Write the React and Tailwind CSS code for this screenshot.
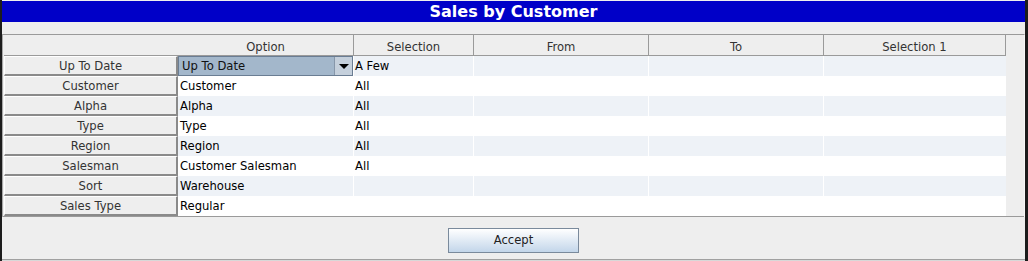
const columns = [
  { label: "Option", w: "w-[176px]" },
  { label: "Selection", w: "w-[120px]" },
  { label: "From", w: "w-[175px]" },
  { label: "To", w: "w-[175px]" },
  { label: "Selection 1", w: "w-[182px]" },
];

const rows = [
  { name: "Up To Date", option: "Up To Date", selection: "A Few", combo: true },
  { name: "Customer", option: "Customer", selection: "All" },
  { name: "Alpha", option: "Alpha", selection: "All" },
  { name: "Type", option: "Type", selection: "All" },
  { name: "Region", option: "Region", selection: "All" },
  { name: "Salesman", option: "Customer Salesman", selection: "All" },
  { name: "Sort", option: "Warehouse", selection: "" },
  { name: "Sales Type", option: "Regular", selection: "" },
];

const Combo = ({ value }) => (
  <div className="flex h-[20px] w-full border border-[#6a7d93] bg-[#a3b7cb]">
    <div className="flex-1 pl-[3px] leading-[19px] text-[#111]">{value}</div>
    <div className="w-[18px] border-l border-[#8797aa] bg-[#c5d0dc] flex items-center justify-center">
      <div className="w-0 h-0 border-l-[5px] border-r-[5px] border-t-[5px] border-l-transparent border-r-transparent border-t-black"></div>
    </div>
  </div>
);

const App = () => {
  return (
    <div className="w-[1028px] h-[261px] bg-[#1c1c1c] flex font-['DejaVu_Sans',sans-serif] text-[11.6px] overflow-hidden">
      <div className="ml-[2px] w-[1023px] h-full flex flex-col bg-[#eeeeee]">
        <div className="mt-[1px] h-[21px] bg-[#0000c8] text-white font-bold text-[16px] flex items-center justify-center">
          Sales by Customer
        </div>
        <div className="h-[12px]"></div>
        <div className="border-t border-[#9a9a9a] border-l border-l-[#a8a8a8] border-r border-r-[#f8f8f8]">
          {/* header */}
          <div className="flex h-[21px] pl-[1px] bg-[#eeeeee]">
            <div className="w-[174px] border-b border-[#9a9a9a]"></div>
            {columns.map((c) => (
              <div
                key={c.label}
                className={`${c.w} border-r border-b border-[#9a9a9a] text-center pt-[2px] leading-[20px] text-[#333]`}
              >
                {c.label}
              </div>
            ))}
          </div>
          {/* body */}
          <div className="flex flex-col pl-[1px]">
            {rows.map((r, i) => (
              <div key={r.name} className="flex h-[20px]">
                <div className="w-[174px] h-[20px] border-t border-l border-t-white border-l-white border-b-2 border-r-2 border-b-[#8a8a8a] border-r-[#8a8a8a] bg-[#eeeeee] text-center leading-[19px] text-[#333]">
                  {r.name}
                </div>
                <div className={`flex ${i % 2 === 0 ? "bg-[#eef2f7]" : "bg-white"}`}>
                  <div className="w-[176px] border-r border-white">
                    {r.combo ? (
                      <Combo value={r.option} />
                    ) : (
                      <div className="pl-[2px] leading-[20px] text-black">{r.option}</div>
                    )}
                  </div>
                  <div className="w-[120px] border-r border-white leading-[20px] text-black pl-[1px]">
                    {r.selection}
                  </div>
                  <div className="w-[175px] border-r border-white"></div>
                  <div className="w-[175px] border-r border-white"></div>
                  <div className="w-[182px]"></div>
                </div>
              </div>
            ))}
          </div>
          <div className="border-t border-[#9a9a9a]"></div>
        </div>
        <div className="flex-1 flex items-start justify-center pt-[11px] border-b border-[#a0a0a0]">
          <button className="w-[131px] h-[25px] border border-[#7a8a9c] bg-gradient-to-b from-white to-[#c3d6ea] text-[#222] text-[11.6px] font-['DejaVu_Sans',sans-serif]">
            Accept
          </button>
        </div>
        <div className="h-[1px] bg-[#d8d8d8]"></div>
      </div>
    </div>
  );
};

export default App;
